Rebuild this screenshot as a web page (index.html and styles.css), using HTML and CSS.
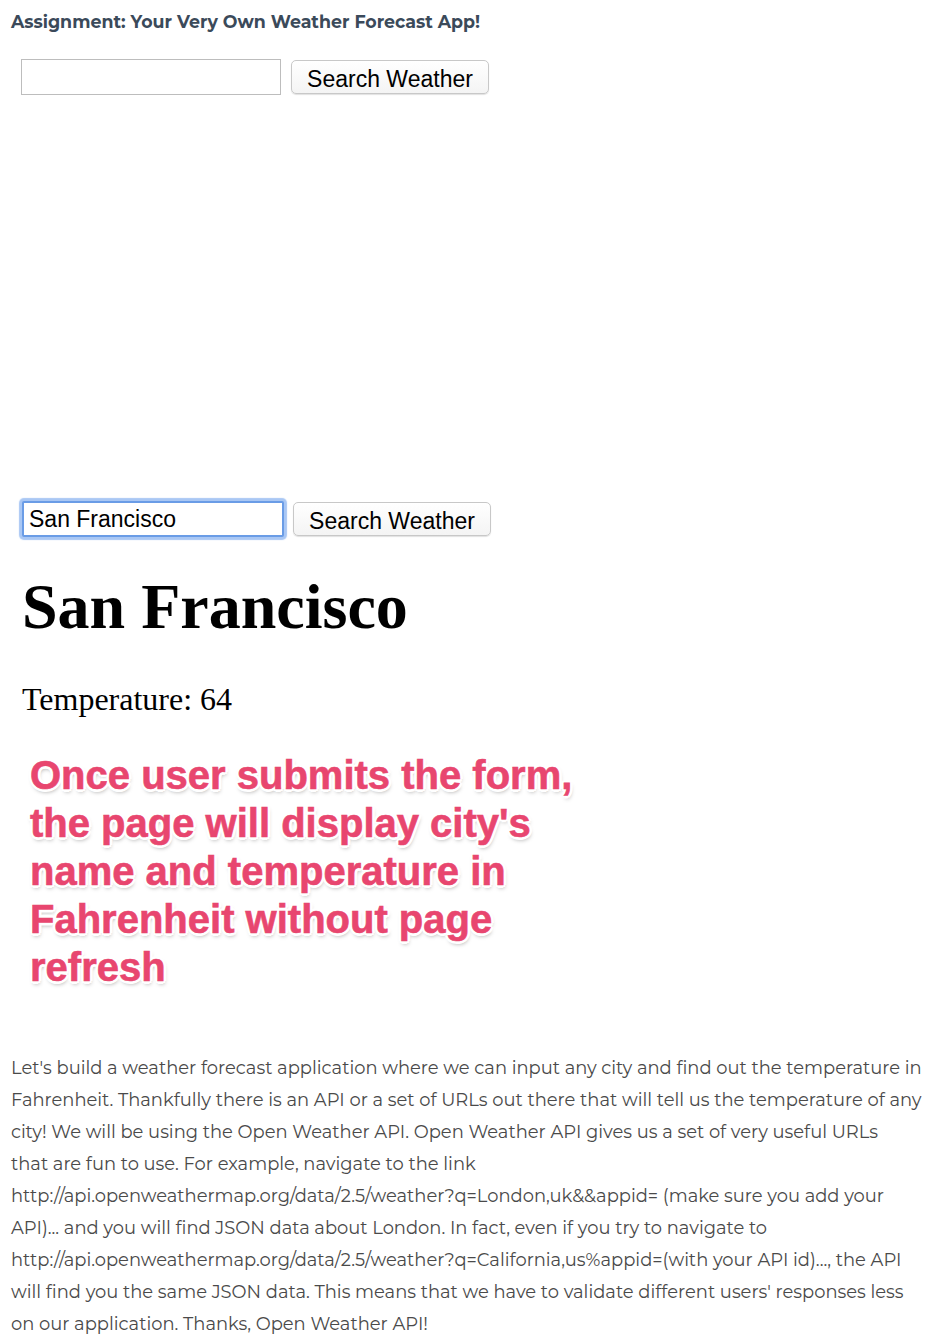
FILE: index.html
```html
<!DOCTYPE html>
<html>
<head>
<meta charset="utf-8">
<link rel="stylesheet" href="styles.css">
</head>
<body>
<div class="page">
  <h3 class="title">Assignment: Your Very Own Weather Forecast App!</h3>
  <form class="search search-empty">
    <input class="field" type="text" value="">
    <button class="btn" type="button">Search Weather</button>
  </form>
  <div class="blank"></div>
  <form class="search search-filled">
    <input class="field field-focus" type="text" value="San Francisco">
    <button class="btn" type="button">Search Weather</button>
  </form>
  <h1 class="city">San Francisco</h1>
  <p class="temp">Temperature: 64</p>
  <div class="note">Once user submits the form, the page will display city's name and temperature in Fahrenheit without page refresh</div>
  <p class="desc">Let's build a weather forecast application where we can input any city and find out the temperature in<br>Fahrenheit. Thankfully there is an API or a set of URLs out there that will tell us the temperature of any<br>city! We will be using the Open Weather API. Open Weather API gives us a set of very useful URLs<br>that are fun to use. For example, navigate to the link<br>http://api.openweathermap.org/data/2.5/weather?q=London,uk&amp;&amp;appid= (make sure you add your<br>API)... and you will find JSON data about London. In fact, even if you try to navigate to<br>http://api.openweathermap.org/data/2.5/weather?q=California,us%appid=(with your API id)..., the API<br>will find you the same JSON data. This means that we have to validate different users' responses less<br>on our application. Thanks, Open Weather API!</p>
</div>
</body>
</html>
```
FILE: styles.css
```css
* { box-sizing: border-box; }
html, body { margin: 0; padding: 0; background: #fff; }
.page { padding: 0 0 0 11px; width: 932px; }
.title {
  margin: 0;
  padding-top: 11px;
  font-family: "Montserrat", "Lato", "Liberation Sans", sans-serif;
  font-weight: 700;
  font-size: 17.4px;
  line-height: 22px;
  color: #3b4a5a;
}
.search { display: flex; align-items: center; margin: 0; padding-left: 10px; }
.search-empty { margin-top: 26px; height: 36px; }
.field {
  width: 260px;
  height: 36px;
  border: 1px solid #bdbdbd;
  margin: 0;
  padding: 0 6px;
  font-family: "Liberation Sans", Arial, sans-serif;
  font-size: 23px;
  color: #000;
  background: #fff;
  outline: none;
}
.btn {
  margin-left: 10px;
  width: 198px;
  height: 34px;
  border: 1px solid #c8c8c8;
  border-radius: 5px;
  background: linear-gradient(#ffffff, #f4f4f4);
  box-shadow: 0 1px 1px rgba(0,0,0,0.12);
  font-family: "Liberation Sans", Arial, sans-serif;
  font-size: 23px;
  color: #000;
  padding: 5px 0 0 0;
}
.blank { height: 405px; }
.search-filled { height: 38px; padding-left: 11px; }
.field-focus {
  width: 262px;
  height: 36px;
  border: 2px solid #6a9ce6;
  border-radius: 2px;
  box-shadow: 0 0 1px 3px rgba(140, 180, 240, 0.75);
  padding: 0 5px;
}
.search-filled .btn { margin-left: 9px; }
.city {
  margin: 32px 0 0 11px;
  font-family: "Liberation Serif", "Times New Roman", serif;
  font-weight: bold;
  font-size: 64px;
  line-height: 74px;
  color: #000;
}
.temp {
  margin: 37px 0 0 11px;
  font-family: "Liberation Serif", "Times New Roman", serif;
  font-size: 32px;
  line-height: 36px;
  color: #000;
}
.note {
  margin: 34px 0 0 19px;
  width: 560px;
  font-family: "Liberation Sans", Arial, sans-serif;
  font-weight: bold;
  font-size: 40px;
  line-height: 48px;
  color: #e8466f;
  text-shadow:
    -2px -2px 0 #fff, 2px -2px 0 #fff, -2px 2px 0 #fff, 2px 2px 0 #fff,
    0 -3px 0 #fff, 0 3px 0 #fff, -3px 0 0 #fff, 3px 0 0 #fff,
    1px 3px 4px rgba(0,0,0,0.35);
  -webkit-text-stroke: 0.6px #e8466f;
}
.desc {
  margin: 61px 0 0 0;
  width: 921px;
  font-family: "Montserrat", "Open Sans", sans-serif;
  font-weight: 400;
  font-size: 17.9px;
  line-height: 32px;
  color: #4a4a4a;
  white-space: nowrap;
}
```
